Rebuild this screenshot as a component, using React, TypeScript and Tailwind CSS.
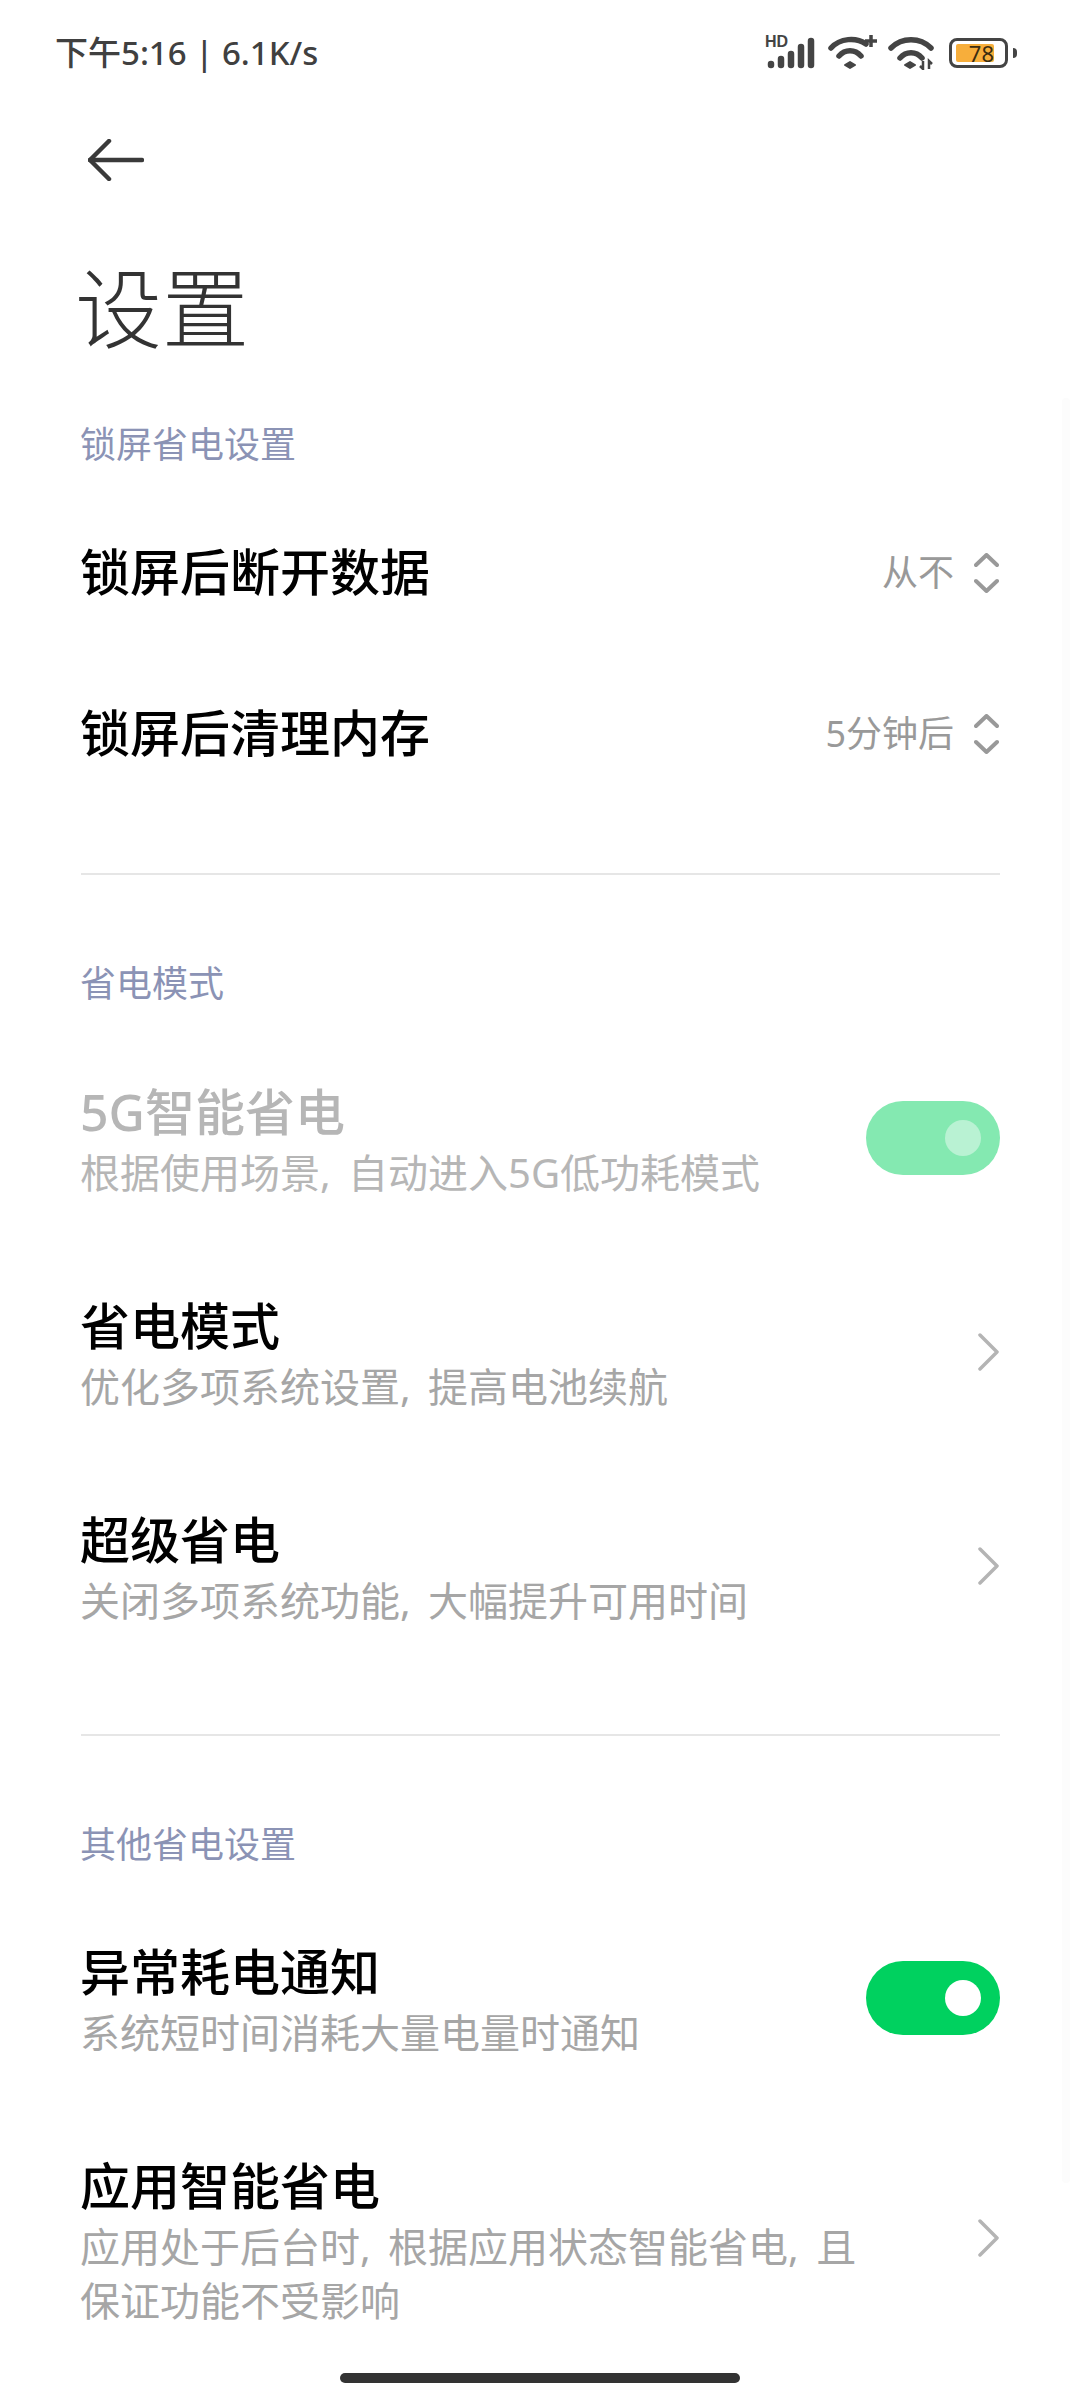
const SectionLabel = ({ text, className }: { text: string; className: string }) => (
  <div className={`h-[50px] text-[36px] leading-[50px] text-[#8b93b5] ${className}`}>{text}</div>
);

const UpDown = () => (
  <svg className="mr-[1px]" width="25" height="40" viewBox="0 0 25 40" fill="none" stroke="#999999" strokeWidth="4" strokeLinecap="round" strokeLinejoin="round">
    <path d="M2 12 L12.5 2 L23 12" />
    <path d="M2 28 L12.5 38 L23 28" />
  </svg>
);

const Chevron = ({ className }: { className: string }) => (
  <svg className={className} width="21" height="38" viewBox="0 0 21 38" fill="none" stroke="#b4b4b4" strokeWidth="3.5" strokeLinecap="round" strokeLinejoin="round">
    <path d="M2 2 L19 19 L2 36" />
  </svg>
);

const Toggle = ({ dim }: { dim?: boolean }) => (
  <div className={`mb-[7px] flex h-[74px] w-[134px] shrink-0 items-center justify-end rounded-full pr-[19px] ${dim ? "bg-[#84e9b1]" : "bg-[#00d15f]"}`}>
    <div className={`h-[36px] w-[36px] rounded-full ${dim ? "bg-[#b9f2d3]" : "bg-white"}`} />
  </div>
);

const SelectRow = ({ title, value }: { title: string; value: string }) => (
  <div className="flex h-[161px] items-center justify-between">
    <div className="text-[50px] font-medium text-black">{title}</div>
    <div className="flex items-center gap-[20px]">
      <span className="text-[36px] text-[#999999]">{value}</span>
      <UpDown />
    </div>
  </div>
);

const DetailRow = ({ title, sub, dim, right }: { title: string; sub: React.ReactNode; dim?: boolean; right: React.ReactNode }) => (
  <div className="flex items-center justify-between py-[48px]">
    <div className="min-w-0">
      <div className={`text-[50px] leading-[61px] font-medium ${dim ? "text-[#b6b6b6]" : "text-black"}`}>{title}</div>
      <div className={`mt-[3px] text-[40px] leading-[54px] [word-spacing:7px] ${dim ? "text-[#b6b6b6]" : "text-[#a6a6a6]"}`}>{sub}</div>
    </div>
    {right}
  </div>
);

const StatusIcons = () => (
  <div className="flex items-center">
    {/* HD + signal */}
    <div className="relative h-[32px] w-[51px]">
      <span className="absolute left-0 top-[-3px] text-[16px] leading-[16px] font-bold text-[#444444] font-['Liberation_Sans',sans-serif]">HD</span>
      <svg className="absolute left-0 top-0" width="51" height="32" viewBox="0 0 51 32" fill="none" stroke="#444444" strokeWidth="6.5" strokeLinecap="round">
        <path d="M6 27 L6 28" />
        <path d="M16 22 L16 28" />
        <path d="M26 17 L26 28" />
        <path d="M36 10 L36 28" />
        <path d="M46 4 L46 28" />
      </svg>
    </div>
    {/* wifi with plus */}
    <svg className="ml-[12px] overflow-visible" width="50" height="34" viewBox="0 0 50 34" fill="none" stroke="#444444" strokeWidth="5.5" strokeLinecap="round">
      <path d="M3 12 C 12 2, 28 1, 38 8" />
      <path d="M11 20 C 17 13, 27 13, 33 20" />
      <path d="M17 29 L22 26 L27 29 L22 32 Z" fill="#444444" strokeWidth="2" strokeLinejoin="round" />
      <path d="M37 5 L49 5 M43 -1 L43 11" strokeWidth="3.5" strokeLinecap="butt" />
    </svg>
    {/* wifi with arrows */}
    <svg className="ml-[10px]" width="48" height="34" viewBox="0 0 48 34" fill="none" stroke="#444444" strokeWidth="5.5" strokeLinecap="round">
      <path d="M3 12 C 14 1, 32 1, 43 12" />
      <path d="M12 22 C 18 15, 28 15, 34 22" />
      <path d="M17 29 L22 26 L27 29 L22 32 Z" fill="#444444" strokeWidth="2" strokeLinejoin="round" />
      <path d="M35 25 L35 33 L32 30 M41 33 L41 25 L44 28" strokeWidth="2.5" strokeLinecap="butt" />
    </svg>
    {/* battery */}
    <div className="ml-[13px] flex items-center">
      <div className="relative h-[30px] w-[59px] rounded-[8px] border-[3px] border-[#444444]">
        <div className="absolute left-[4px] top-[3px] h-[18px] w-[38px] rounded-[2px] bg-[#f7ae3b]" />
        <div className="absolute inset-0 flex items-center justify-end pr-[11px] text-[22px] leading-none text-[#3a2c10]">78</div>
      </div>
      <div className="ml-[5px] h-[10px] w-[4px] rounded-r-full bg-[#444444]" />
    </div>
  </div>
);

export default function App() {
  return (
    <div className="relative h-[2400px] w-[1080px] overflow-hidden bg-white font-['Noto_Sans','Noto_Sans_CJK_SC',sans-serif]">
      <div className="flex h-[106px] items-center justify-between pl-[55px] pr-[63px]">
        <div className="text-[33px] font-medium text-[#404040]">下午5:16 | 6.1K/s</div>
        <StatusIcons />
      </div>

      <div className="flex h-[108px] items-center pl-[88px]">
        <svg width="56" height="42" viewBox="0 0 56 42" fill="none" stroke="#3a3a3a" strokeWidth="4.5" strokeLinecap="round" strokeLinejoin="round">
          <path d="M54 21 L2 21" />
          <path d="M21 2 L2 21 L21 40" />
        </svg>
      </div>

      <div className="flex h-[192px] items-center pb-[4px] pl-[75px] text-[87px] font-light text-[#333333]">设置</div>

      <div className="px-[80px] pt-[14px]">
        <SectionLabel text="锁屏省电设置" className="" />
        <div className="mt-[22px]">
          <SelectRow title="锁屏后断开数据" value="从不" />
          <SelectRow title="锁屏后清理内存" value="5分钟后" />
        </div>
        <div className="ml-[1px] mt-[59px] h-[2px] bg-[#e6e6e6]" />

        <SectionLabel text="省电模式" className="mt-[84px]" />
        <div className="mt-[25px]">
          <DetailRow title="5G智能省电" sub="根据使用场景, 自动进入5G低功耗模式" dim right={<Toggle dim />} />
          <DetailRow title="省电模式" sub="优化多项系统设置, 提高电池续航" right={<Chevron className="mb-[7px] mr-[1px] shrink-0" />} />
          <DetailRow title="超级省电" sub="关闭多项系统功能, 大幅提升可用时间" right={<Chevron className="mb-[7px] mr-[1px] shrink-0" />} />
        </div>
        <div className="ml-[1px] mt-[58px] h-[2px] bg-[#e6e6e6]" />

        <SectionLabel text="其他省电设置" className="mt-[84px]" />
        <div className="mt-[24px]">
          <DetailRow title="异常耗电通知" sub="系统短时间消耗大量电量时通知" right={<Toggle />} />
          <DetailRow
            title="应用智能省电"
            sub={<>应用处于后台时, 根据应用状态智能省电, 且<br />保证功能不受影响</>}
            right={<Chevron className="mb-[9px] mr-[1px] shrink-0" />}
          />
        </div>
      </div>

      <div className="absolute left-[1062px] top-[398px] h-[1785px] w-[8px] rounded-full bg-[#fcfcfc]" />
      <div className="absolute bottom-[17px] left-[340px] h-[10px] w-[400px] rounded-full bg-[#333333]" />
    </div>
  );
}
